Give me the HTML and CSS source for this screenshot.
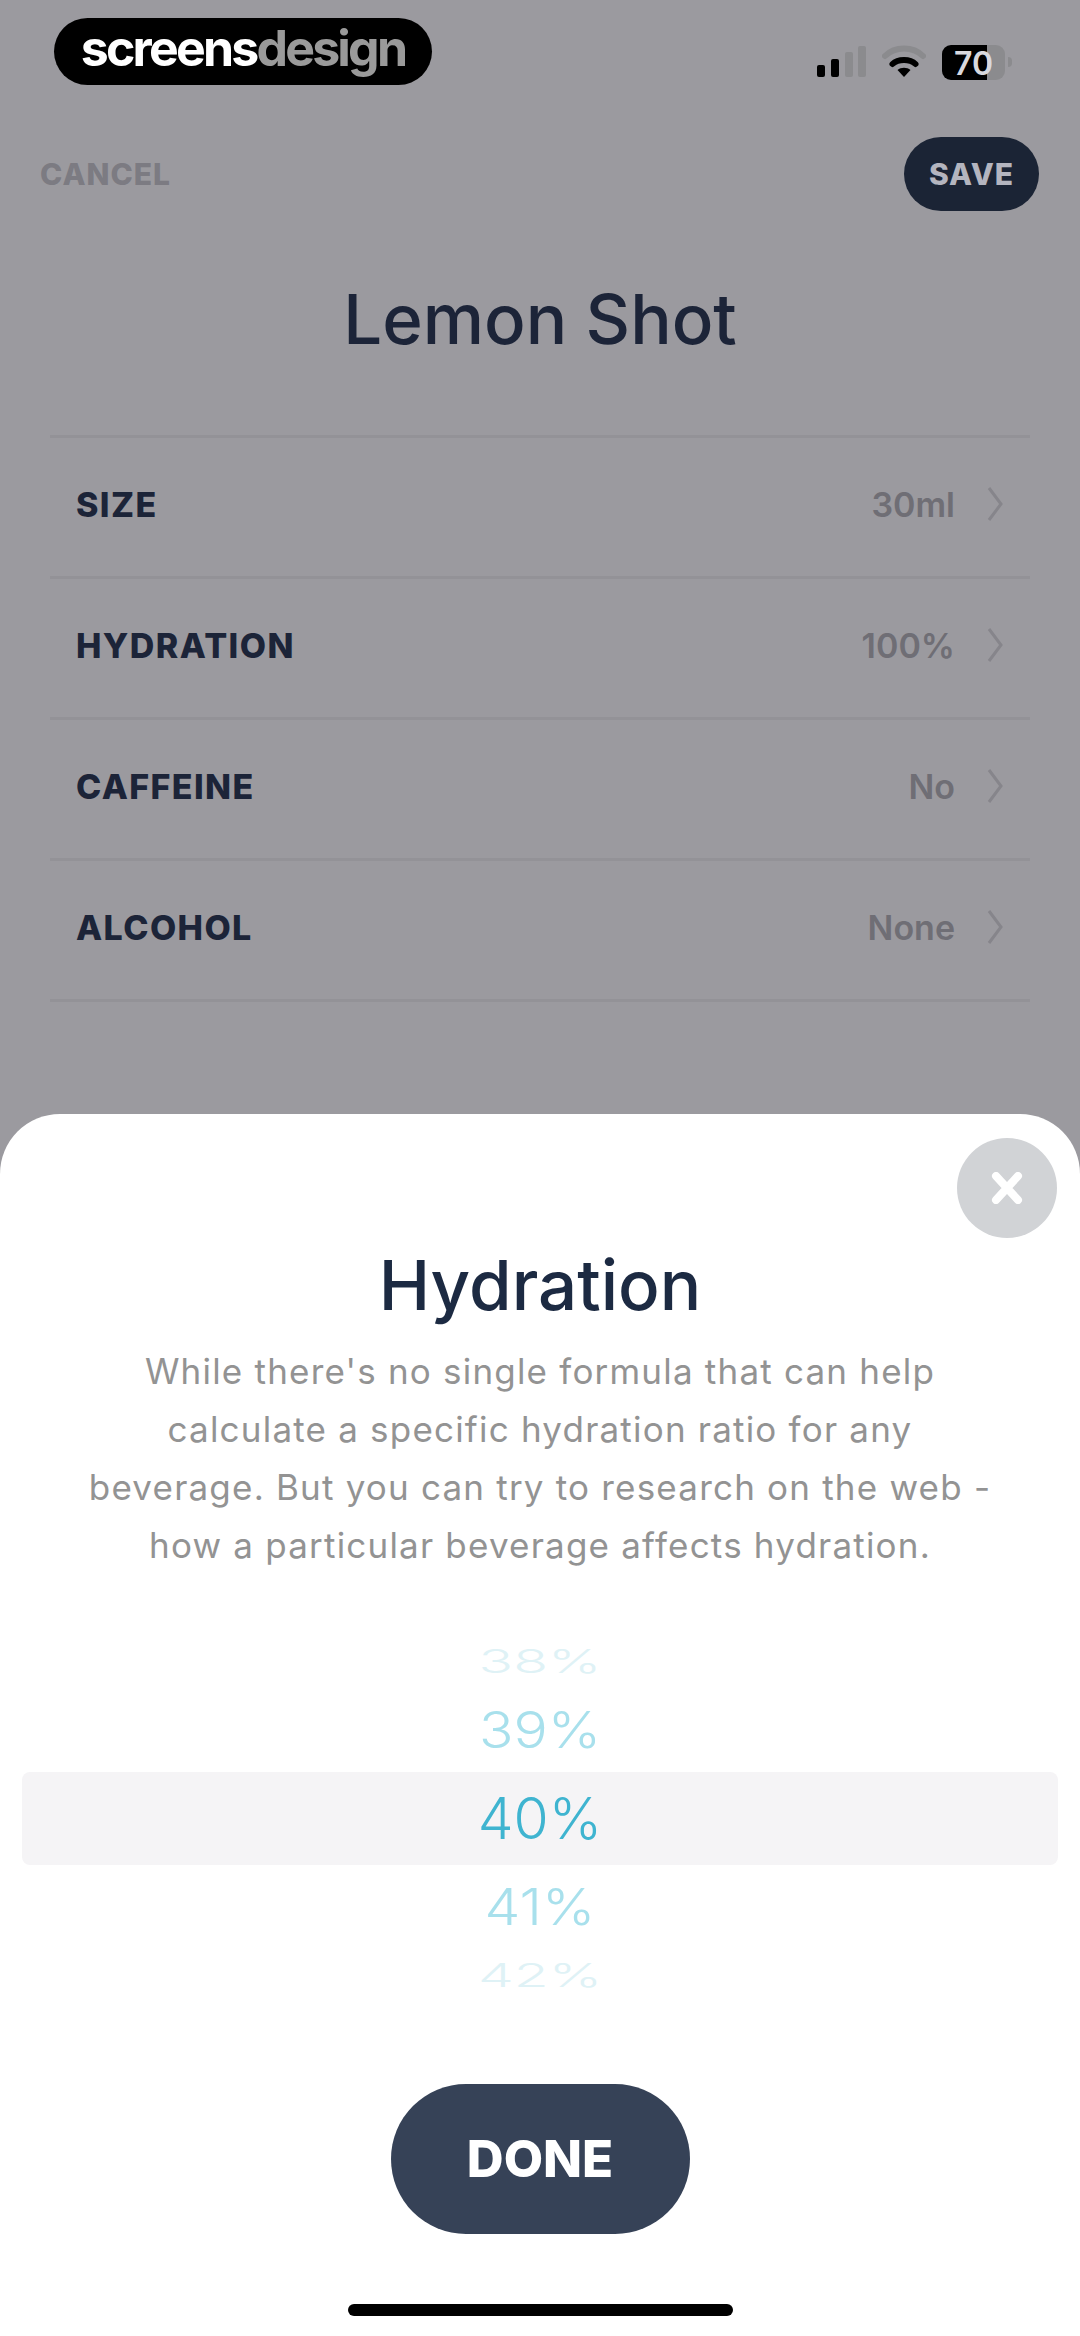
FILE: index.html
```html
<!DOCTYPE html>
<html lang="en">
<head>
    <meta charset="UTF-8">
    <meta name="viewport" content="width=device-width, initial-scale=1.0">
    <title>Lemon Shot - Hydration</title>
    <link rel="stylesheet" href="styles.css">
</head>
<body>

<div class="screen">
    <div class="backdrop">
        <div class="statusBar">
            <div class="logo"><span class="logoWhite">screens</span><span class="logoGrey">design</span></div>
            <div class="statusIcons">
                <svg class="signal" width="50" height="32" viewBox="0 0 50 32">
                    <rect x="0" y="19" width="8" height="12" rx="2" fill="#000"/>
                    <rect x="14" y="13" width="8" height="18" rx="2" fill="#000"/>
                    <rect x="28" y="6" width="8" height="25" rx="2" fill="#8b8b8e"/>
                    <rect x="41" y="0" width="8" height="31" rx="2" fill="#8b8b8e"/>
                </svg>
                <svg class="wifi" width="44" height="34" viewBox="0 0 44 34">
                    <path d="M3 11 C13 1 31 1 41 11" fill="none" stroke="#8b8b8e" stroke-width="6" stroke-linecap="round"/>
                    <path d="M10.500 19 C16 13.500 28 13.500 33.500 19" fill="none" stroke="#000" stroke-width="6" stroke-linecap="round"/>
                    <path d="M15.500 25 C19 22 25 22 28.500 25 L22 32 Z" fill="#000"/>
                </svg>
                <div class="battery">70</div>
                <div class="batteryNub"></div>
            </div>
        </div>

        <div class="navRow">
            <span class="cancel">CANCEL</span>
            <span class="save">SAVE</span>
        </div>

        <h1 class="drinkName">Lemon Shot</h1>

        <ul class="settings">
            <li class="settingRow">
                <span class="settingLabel">SIZE</span>
                <span class="settingValue">30ml</span>
                <svg class="chevron" width="16" height="36" viewBox="0 0 16 36"><path d="M2 2 L14 18 L2 34" fill="none" stroke="#86858b" stroke-width="3"/></svg>
            </li>
            <li class="settingRow">
                <span class="settingLabel">HYDRATION</span>
                <span class="settingValue">100%</span>
                <svg class="chevron" width="16" height="36" viewBox="0 0 16 36"><path d="M2 2 L14 18 L2 34" fill="none" stroke="#86858b" stroke-width="3"/></svg>
            </li>
            <li class="settingRow">
                <span class="settingLabel">CAFFEINE</span>
                <span class="settingValue">No</span>
                <svg class="chevron" width="16" height="36" viewBox="0 0 16 36"><path d="M2 2 L14 18 L2 34" fill="none" stroke="#86858b" stroke-width="3"/></svg>
            </li>
            <li class="settingRow">
                <span class="settingLabel">ALCOHOL</span>
                <span class="settingValue">None</span>
                <svg class="chevron" width="16" height="36" viewBox="0 0 16 36"><path d="M2 2 L14 18 L2 34" fill="none" stroke="#86858b" stroke-width="3"/></svg>
            </li>
        </ul>
    </div>

    <div class="sheet">
        <div class="closeButton">
            <svg width="32" height="32" viewBox="0 0 32 32"><path d="M5 4 L27 28 M27 4 L5 28" fill="none" stroke="#fff" stroke-width="8" stroke-linecap="round"/></svg>
        </div>

        <h2 class="sheetTitle">Hydration</h2>
        <p class="sheetText">While there's no single formula that can help<br>calculate a specific hydration ratio for any<br>beverage. But you can try to research on the web -<br>how a particular beverage affects hydration.</p>

        <div class="picker">
            <div class="pickerRow rowFar"><span>38%</span></div>
            <div class="pickerRow rowNearTop"><span>39%</span></div>
            <div class="pickerRow rowActive"><span>40%</span></div>
            <div class="pickerRow rowNearBottom"><span>41%</span></div>
            <div class="pickerRow rowFarBottom"><span>42%</span></div>
        </div>

        <div class="doneButton">DONE</div>
        <div class="homeBar"></div>
    </div>
</div>

</body>
</html>
```

FILE: styles.css
```css
* {
    box-sizing: border-box;
}

body {
    margin: 0;
    font-family: Inter, "Open Sans", sans-serif;
}

.screen {
    width: 1080px;
    height: 2336px;
    overflow: hidden;
    background-color: #9b9a9f;
    display: flex;
    flex-direction: column;
}

.backdrop {
    height: 1114px;
    flex-shrink: 0;
}

/* status bar */
.statusBar {
    display: flex;
    justify-content: space-between;
    padding: 18px 68px 0 54px;
    height: 137px;
}

.logo {
    width: 378px;
    height: 67px;
    background-color: #000;
    border-radius: 34px;
    display: flex;
    justify-content: center;
    align-items: center;
    font-weight: 700;
    font-size: 50px;
    letter-spacing: -2.800px;
    line-height: 60px;
    padding-bottom: 8px;
}

.logoWhite {
    color: #fff;
}

.logoGrey {
    color: #9a9a9a;
}

.statusIcons {
    display: flex;
    align-items: center;
    height: 34px;
    margin-top: 27px;
}

.wifi {
    margin-left: 15px;
}

.battery {
    width: 63px;
    height: 35px;
    margin-left: 16px;
    border-radius: 9px;
    background: linear-gradient(90deg, #000 0 71%, #8b8b8e 71%);
    color: #d9d9de;
    font-weight: 600;
    font-size: 32px;
    line-height: 37px;
    padding-left: 12px;
}

.batteryNub {
    width: 4px;
    height: 10px;
    margin-left: 3px;
    border-radius: 0 4px 4px 0;
    background-color: #8b8b8e;
}

/* nav */
.navRow {
    display: flex;
    justify-content: space-between;
    align-items: center;
    padding: 0 41px 0 40px;
    height: 74px;
}

.cancel {
    color: #7c7b82;
    font-weight: 800;
    font-size: 30px;
    letter-spacing: 1px;
}

.save {
    width: 135px;
    height: 74px;
    border-radius: 37px;
    background-color: #1b2435;
    color: #b4b5bf;
    font-weight: 800;
    font-size: 30px;
    letter-spacing: 1px;
    text-align: center;
    line-height: 74px;
}

.drinkName {
    margin: 58px 0 0;
    height: 100px;
    text-align: center;
    color: #1c2438;
    font-weight: 500;
    font-size: 69px;
    line-height: 100px;
}

/* settings list */
.settings {
    list-style: none;
    margin: 66px 50px 0;
    padding: 0;
    border-top: 3px solid #939297;
}

.settingRow {
    height: 141px;
    display: flex;
    align-items: center;
    padding: 0 27px 6px 26px;
    border-bottom: 3px solid #939297;
}

.settingLabel {
    flex: 1;
    color: #1c2438;
    font-weight: 800;
    font-size: 34px;
    letter-spacing: 1.400px;
}

.settingValue {
    color: #6f6e75;
    font-weight: 600;
    font-size: 34px;
}

.chevron {
    margin-left: 32px;
}

/* bottom sheet */
.sheet {
    position: relative;
    flex: 1;
    background-color: #fff;
    border-radius: 60px 60px 0 0;
    display: flex;
    flex-direction: column;
    align-items: center;
}

.closeButton {
    position: absolute;
    top: 24px;
    right: 23px;
    width: 100px;
    height: 100px;
    border-radius: 50%;
    background-color: #d1d3d6;
    display: flex;
    justify-content: center;
    align-items: center;
}

.sheetTitle {
    margin: 129px 0 0;
    height: 84px;
    color: #1c2a42;
    font-weight: 500;
    font-size: 69px;
    line-height: 84px;
}

.sheetText {
    margin: 15px 0 0;
    text-align: center;
    color: #939393;
    font-size: 35px;
    font-weight: 400;
    line-height: 58px;
    letter-spacing: 1.200px;
}

/* percentage wheel */
.picker {
    margin-top: 53px;
    width: 1036px;
    font-size: 57px;
    font-weight: 300;
    text-align: center;
}

.pickerRow {
    display: flex;
    justify-content: center;
    align-items: center;
}

.rowFar {
    height: 68px;
    color: #dff2f6;
}

.rowFar span {
    transform: scaleY(0.58);
}

.rowNearTop {
    height: 77px;
    padding-bottom: 8px;
    color: #a8e0ec;
}

.rowNearTop span {
    transform: scaleY(0.88);
}

.rowActive {
    height: 93px;
    color: #3fb4d0;
    background-color: #f5f4f6;
    border-radius: 8px;
}

.rowNearBottom {
    height: 82px;
    color: #a8e0ec;
}

.rowNearBottom span {
    transform: scaleY(0.88);
}

.rowFarBottom {
    height: 56px;
    color: #dff2f6;
}

.rowFarBottom span {
    transform: scaleY(0.58);
}

.doneButton {
    margin-top: 81px;
    width: 299px;
    height: 150px;
    flex-shrink: 0;
    border-radius: 75px;
    background-color: #364257;
    color: #fff;
    font-weight: 800;
    font-size: 51px;
    text-align: center;
    line-height: 150px;
}

.homeBar {
    margin-top: 70px;
    width: 385px;
    height: 12px;
    flex-shrink: 0;
    border-radius: 6px;
    background-color: #000;
}
```
